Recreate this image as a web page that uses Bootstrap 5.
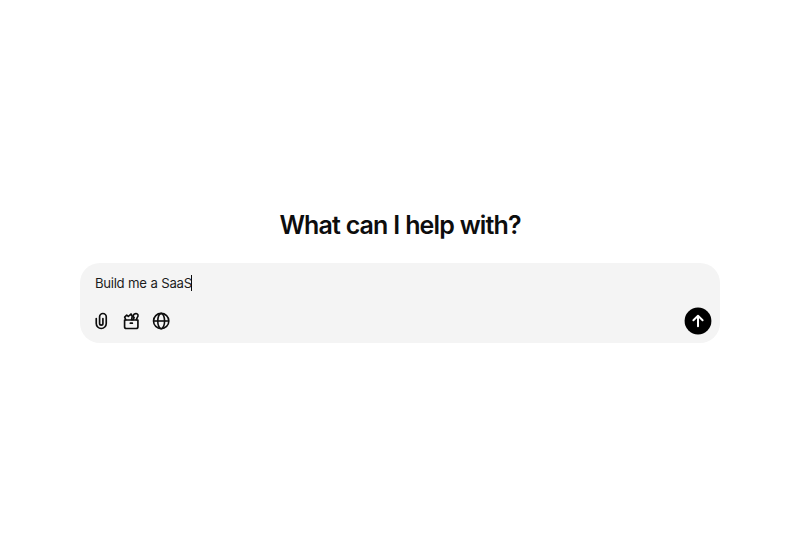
<!DOCTYPE html>
<html lang="en">
<head>
    <meta charset="UTF-8">
    <meta name="viewport" content="width=device-width, initial-scale=1.0">
    <title>What can I help with?</title>
    <link href="https://cdn.jsdelivr.net/npm/bootstrap@5.3.0/dist/css/bootstrap.min.css" rel="stylesheet">
    <style>
        body {
            background-color: #fff;
            color: #0d0d0d;
            font-family: Inter, "Liberation Sans", sans-serif;
        }

        .chat-main {
            padding: 210px 80px 0;
        }

        .chat-title {
            font-size: 25px;
            font-weight: 600;
            line-height: 30px;
            letter-spacing: -0.88px;
            word-spacing: 0.4px;
            margin-bottom: 23px;
        }

        .composer {
            height: 80px;
            background-color: #f4f4f4;
            border-radius: 20px;
            padding: 10px 8px 8px 11px;
        }

        .prompt-text {
            font-size: 13.2px;
            line-height: 20px;
            letter-spacing: -0.32px;
            word-spacing: 0.4px;
            padding-left: 4px;
            color: #1c1c1c;
        }

        .caret {
            width: 1px;
            height: 16px;
            margin-left: -0.5px;
            background-color: #0d0d0d;
        }

        .tool-btn {
            width: 20px;
            height: 20px;
            color: #0d0d0d;
        }

        .tools {
            gap: 10px;
        }

        .send-btn {
            width: 28px;
            height: 28px;
            color: #000;
        }

        .send-btn:hover {
            color: #333;
        }
    </style>
</head>
<body>
    <main class="chat-main">
        <h1 class="chat-title text-center">What can I help with?</h1>

        <div class="composer d-flex flex-column justify-content-between">
            <div class="prompt-text d-flex align-items-center">
                <span id="promptText">Build me a SaaS</span><span class="caret"></span>
            </div>

            <div class="d-flex justify-content-between align-items-center">
                <div class="tools d-flex">
                    <button type="button" class="tool-btn btn border-0 p-0 d-flex" aria-label="Attach">
                        <svg width="20" height="20" viewBox="0 0 24 24" fill="none" stroke="currentColor" stroke-width="2" stroke-linecap="round">
                            <path d="M14.3 9v6a2 2 0 0 1-4 0V7a4 4 0 0 1 8 0v8a6 6 0 0 1-12 0V9"/>
                        </svg>
                    </button>
                    <button type="button" class="tool-btn btn border-0 p-0 d-flex" aria-label="Tools">
                        <svg width="20" height="20" viewBox="0 0 24 24" fill="none" stroke="currentColor" stroke-width="2" stroke-linecap="round" stroke-linejoin="round">
                            <path d="M4.3 10.8h16v8a2.2 2.2 0 0 1-2.2 2.2H6.5a2.2 2.2 0 0 1-2.2-2.2z"/>
                            <path d="M11.2 14.6h2.4"/>
                            <path d="M5.7 10.5L4.400 7.300l2.500-2.400 1.900 1.700 3.200-3 1.500 2.700-.8 4"/>
                            <path d="M14.300 10.500l1.500-2.500c-1.600-1-1.300-3.500.3-4.400 2-.9 4.300-.2 4.400 1.700.1 1.100-.4 1.800-1 2.500l-1 2.600"/>
                        </svg>
                    </button>
                    <button type="button" class="tool-btn btn border-0 p-0 d-flex" aria-label="Search">
                        <svg width="20" height="20" viewBox="0 0 24 24" fill="none" stroke="currentColor" stroke-width="1.9">
                            <circle cx="12.2" cy="12" r="9.2"/>
                            <ellipse cx="12.2" cy="12" rx="4.1" ry="9.2"/>
                            <path d="M3.2 12h18"/>
                        </svg>
                    </button>
                </div>
                <button type="button" class="send-btn btn border-0 p-0 d-flex" aria-label="Send">
                    <svg width="28" height="28" viewBox="0 0 28 28" fill="none">
                        <circle cx="14" cy="14" r="13.4" fill="currentColor"/>
                        <path d="M14 19.2V9M9.4 13.2L14 8.800l4.600 4.400" stroke="#fff" stroke-width="2" stroke-linecap="round" stroke-linejoin="round"/>
                    </svg>
                </button>
            </div>
        </div>
    </main>
    <script src="https://cdn.jsdelivr.net/npm/bootstrap@5.3.0/dist/js/bootstrap.bundle.min.js"></script>
</body>
</html>
